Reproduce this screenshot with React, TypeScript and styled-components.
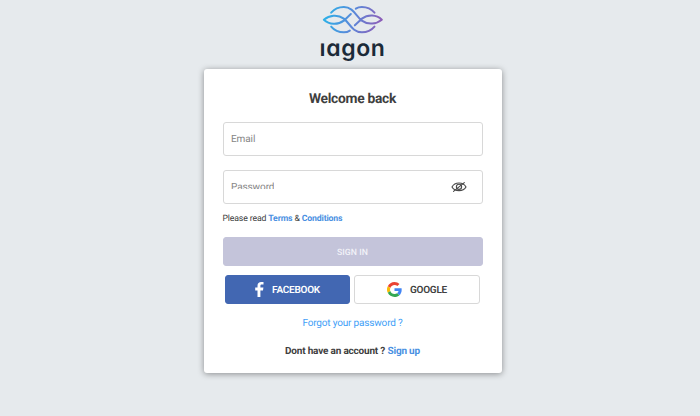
import React from "react";
import styled, { createGlobalStyle } from "styled-components";

const GlobalStyle = createGlobalStyle`
  * { box-sizing: border-box; }
  html, body { margin: 0; height: 100%; background: #e6eaed; overflow: hidden; }
  body { font-family: Roboto, "Liberation Sans", sans-serif; color: #404040; text-rendering: geometricPrecision; }
`;

const Page = styled.main`
  display: flex;
  flex-direction: column;
  align-items: center;
  height: 416px;
  padding: 4px 0 0 5px;
`;

const Brand = styled.header`
  display: flex;
  flex-direction: column;
  align-items: center;
  width: 84px;
  height: 64.5px;
  flex: none;
`;

const Mark = styled.svg`
  display: block;
  width: 64px;
  height: 32px;
  flex: none;
`;

const Wordmark = styled.span`
  font: 600 23px/26px Inter, sans-serif;
  font-feature-settings: "cv11";
  letter-spacing: 0.6px;
  color: #1b2a38;
  margin-top: -1px;
`;

const Card = styled.section`
  display: flex;
  flex-direction: column;
  width: 298px;
  height: 304.5px;
  padding: 0 19px;
  background: #fff;
  border-radius: 3px;
  box-shadow: 0 1px 6px rgba(0, 0, 0, 0.4);
`;

const Title = styled.h1`
  margin: 21px 0 13px;
  font-size: 13.8px;
  line-height: 19px;
  font-weight: 700;
  letter-spacing: -0.28px;
  text-align: center;
`;

const Field = styled.label`
  display: flex;
  align-items: center;
  justify-content: space-between;
  height: 34px;
  margin-bottom: 14px;
  padding: 0 15px 0 7.5px;
  border: 1px solid #d8d8d8;
  border-radius: 3px;
`;

const Placeholder = styled.span`
  height: 14px;
  margin-top: 2px;
  font-size: 10px;
  line-height: 14px;
  letter-spacing: -0.1px;
  color: #858585;
`;

const PasswordText = styled(Placeholder)`
  height: 10px;
  margin-top: -6px;
  line-height: 18px;
  overflow: hidden;
`;

const Link = styled.a<{ $bright?: boolean }>`
  color: ${(p) => (p.$bright ? "#41a0f7" : "#4a90e2")};
  text-decoration: none;
`;

const Terms = styled.p`
  margin: -5px 0 12.5px;
  font-size: 8.7px;
  line-height: 12px;
  letter-spacing: -0.14px;
  a { font-weight: 700; }
`;

const Button = styled.button<{ $kind: "submit" | "facebook" | "google" }>`
  display: flex;
  align-items: center;
  justify-content: center;
  flex: 1;
  height: 29px;
  padding: ${(p) => (p.$kind === "submit" ? "2px 0 0" : "0")};
  border-radius: 3px;
  border: 1px solid ${(p) => ({ submit: "#c4c4da", facebook: "#4267b2", google: "#d8d8d8" })[p.$kind]};
  background: ${(p) => ({ submit: "#c4c4da", facebook: "#4267b2", google: "#fff" })[p.$kind]};
  color: ${(p) => ({ submit: "#f2f2f8", facebook: "#fff", google: "#404040" })[p.$kind]};
  font: ${(p) => (p.$kind === "submit" ? "500 8.7px" : "600 10px")} Roboto, sans-serif;
  letter-spacing: ${(p) => (p.$kind === "submit" ? "0.05px" : "-0.26px")};
  text-rendering: geometricPrecision;
  svg { flex: none; }
`;

const SubmitRow = styled.div`
  display: flex;
  margin-bottom: 9px;
`;

const SocialRow = styled.div`
  display: flex;
  gap: 4px;
  padding: 0 3px 0 2px;
`;

const Forgot = styled.p`
  margin: 13px 0 0;
  font-size: 10px;
  line-height: 14px;
  letter-spacing: -0.17px;
  text-align: center;
`;

const Signup = styled(Forgot)`
  margin-top: 13.5px;
  font-weight: 700;
  letter-spacing: -0.19px;
`;

const LogoMark = () => (
  <Mark viewBox="7.5 6 192 96" fill="none" stroke="url(#brand)" strokeWidth="6" strokeLinecap="round" strokeLinejoin="round">
    <defs>
      <linearGradient id="brand" gradientUnits="userSpaceOnUse" x1="16" y1="30" x2="190" y2="80">
        <stop offset="0" stopColor="#29b3e9" />
        <stop offset="0.5" stopColor="#5b88d9" />
        <stop offset="1" stopColor="#925ab5" />
      </linearGradient>
    </defs>
    <path d="M38 32C49 19 61 15 76 15C104 15 113 43 130 56C149 70 174 66 190 53C174 38 149 36 130 50L109 70" />
    <path d="M168 74C157 87 145 91 130 91C102 91 93 63 76 50C57 36 32 40 16 53C32 68 57 70 76 56L97 36" />
    <path d="M112 20C118 16 124 15 130 15C145 15 157 19 168 32" />
    <path d="M94 86C88 90 82 91 76 91C61 91 49 87 38 74" />
  </Mark>
);

const HiddenEye = () => (
  <svg width="16" height="12" viewBox="0 0 16 12" fill="none" stroke="#4a4a4a" strokeWidth="1.15" strokeLinecap="round">
    <path d="M1 6C3.8.7 12.2.7 15 6C12.2 10.8 3.8 10.8 1 6Z" />
    <circle cx="8" cy="5.8" r="2.6" />
    <path d="M2.5 10.4L13.3 1.6" />
  </svg>
);

const FacebookIcon = () => (
  <svg width="9" height="15" viewBox="0 0 9 15" fill="#fff">
    <path d="M2.5 15V8.4H.2V5.6h2.3V3.7C2.5 1.3 4 0 6.2 0h2.3v2.5H7c-1.2 0-1.6.5-1.6 1.4v1.7h3L8 8.4H5.4V15Z" />
  </svg>
);

const GoogleIcon = () => (
  <svg width="15" height="15" viewBox="0 0 48 48">
    <path fill="#EA4335" d="M24 9.5c3.54 0 6.71 1.22 9.21 3.6l6.85-6.85C35.9 2.38 30.47 0 24 0 14.62 0 6.51 5.38 2.56 13.22l7.98 6.19C12.43 13.72 17.74 9.5 24 9.5z" />
    <path fill="#4285F4" d="M46.98 24.55c0-1.57-.15-3.09-.38-4.55H24v9.02h12.94c-.58 2.96-2.26 5.48-4.78 7.18l7.73 6c4.51-4.18 7.09-10.36 7.09-17.65z" />
    <path fill="#FBBC05" d="M10.53 28.59A14.5 14.5 0 0 1 10.53 19.41l-7.98-6.19a24 24 0 0 0 0 21.56l7.98-6.19z" />
    <path fill="#34A853" d="M24 48c6.48 0 11.93-2.13 15.89-5.81l-7.73-6c-2.15 1.45-4.92 2.3-8.16 2.3-6.26 0-11.57-4.22-13.47-9.91l-7.98 6.19C6.51 42.62 14.62 48 24 48z" />
  </svg>
);

const ButtonText = styled.span`
  margin: 2px 0 0 8.5px;
`;

export default function App() {
  return (
    <>
      <GlobalStyle />
      <Page>
        <Brand>
          <LogoMark />
          <Wordmark>ıagon</Wordmark>
        </Brand>
        <Card>
          <Title>Welcome back</Title>
          <Field><Placeholder>Email</Placeholder></Field>
          <Field><PasswordText>Password</PasswordText><HiddenEye /></Field>
          <Terms>Please read <Link href="#">Terms</Link> &amp; <Link href="#">Conditions</Link></Terms>
          <SubmitRow><Button $kind="submit">SIGN IN</Button></SubmitRow>
          <SocialRow>
            <Button $kind="facebook"><FacebookIcon /><ButtonText>FACEBOOK</ButtonText></Button>
            <Button $kind="google"><GoogleIcon /><ButtonText>GOOGLE</ButtonText></Button>
          </SocialRow>
          <Forgot><Link href="#" $bright>Forgot your password ?</Link></Forgot>
          <Signup>Dont have an account ? <Link href="#">Sign up</Link></Signup>
        </Card>
      </Page>
    </>
  );
}
